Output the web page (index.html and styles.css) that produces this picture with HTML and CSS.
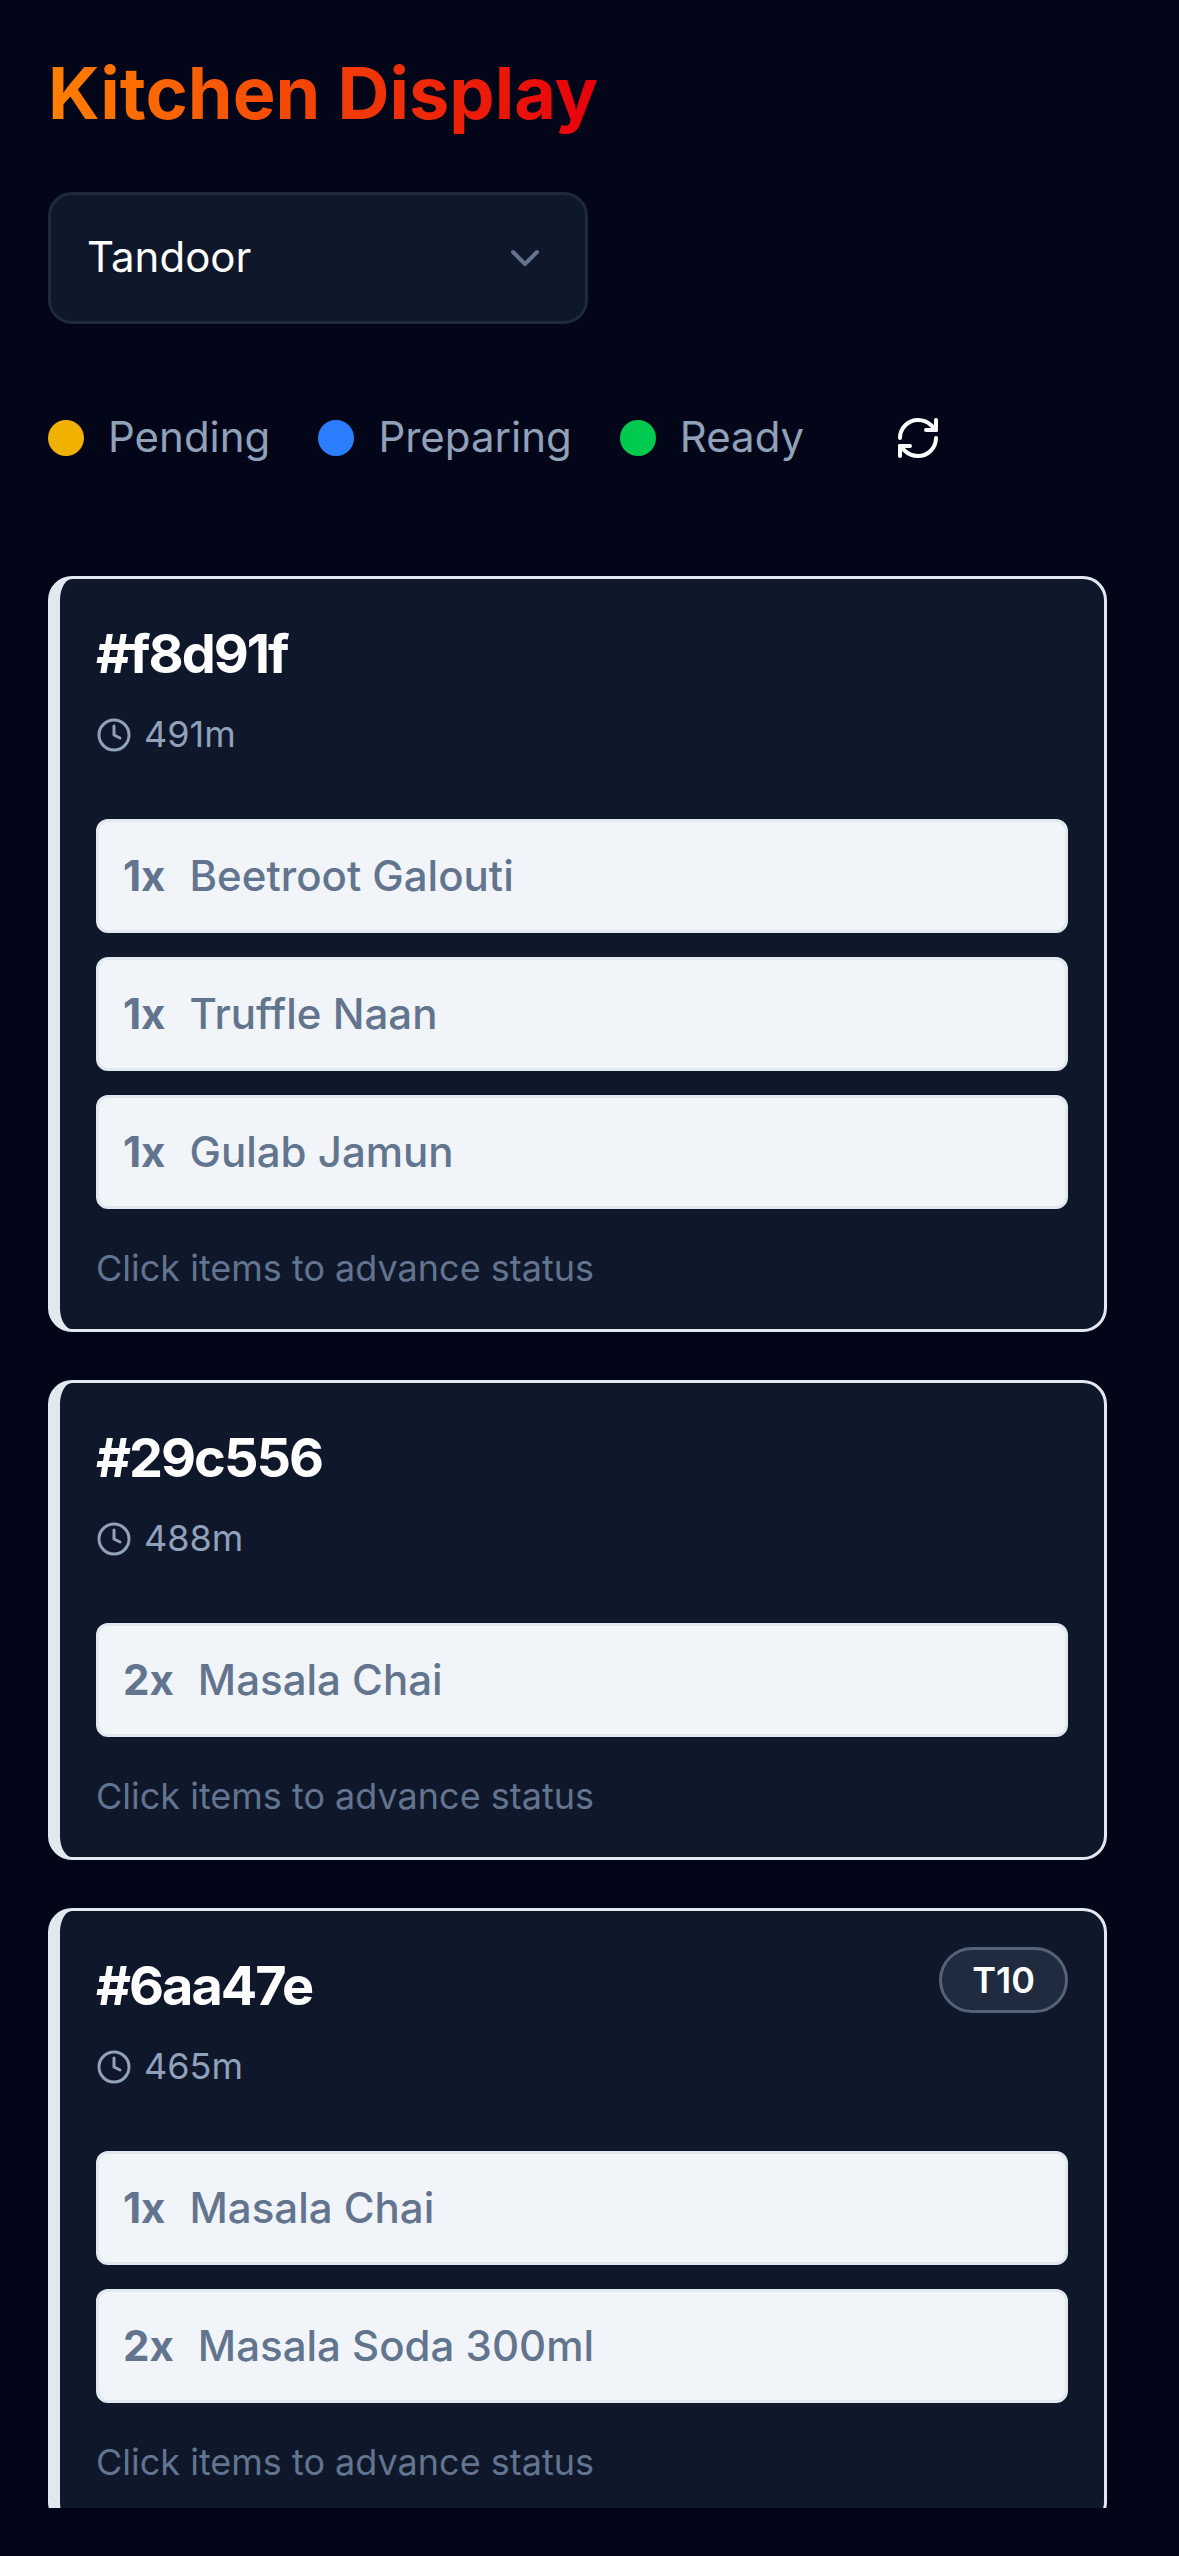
FILE: index.html
```html
<!DOCTYPE html>
<html lang="en">
<head>
    <meta charset="UTF-8">
    <meta name="viewport" content="width=device-width, initial-scale=1.0">
    <title>Kitchen Display</title>
    <link rel="stylesheet" href="styles.css">
</head>
<body>
    <div class="screen">
        <h1 class="title">Kitchen Display</h1>

        <div class="station-select">
            <span class="station-name">Tandoor</span>
            <svg class="chevron" viewBox="0 0 24 24"><path d="m6 9 6 6 6-6"/></svg>
        </div>

        <div class="legend">
            <div class="legend-item"><span class="dot dot-pending"></span><span class="legend-label">Pending</span></div>
            <div class="legend-item"><span class="dot dot-preparing"></span><span class="legend-label">Preparing</span></div>
            <div class="legend-item"><span class="dot dot-ready"></span><span class="legend-label">Ready</span></div>
            <button class="refresh">
                <svg viewBox="0 0 24 24">
                    <path d="M3 12a9 9 0 0 1 9-9 9.75 9.75 0 0 1 6.74 2.74L21 8"/>
                    <path d="M21 3v5h-5"/>
                    <path d="M21 12a9 9 0 0 1-9 9 9.75 9.75 0 0 1-6.74-2.74L3 16"/>
                    <path d="M8 16H3v5"/>
                </svg>
            </button>
        </div>

        <div class="orders">
            <div class="order">
                <div class="order-head">
                    <div>
                        <div class="order-id">#f8d91f</div>
                        <div class="order-time">
                            <svg viewBox="0 0 24 24"><circle cx="12" cy="12" r="10"/><path d="M12 6v6l4 2"/></svg>
                            <span class="time-label">491m</span>
                        </div>
                    </div>
                </div>
                <div class="items">
                    <div class="item"><span class="qty">1x</span><span>Beetroot Galouti</span></div>
                    <div class="item"><span class="qty">1x</span><span>Truffle Naan</span></div>
                    <div class="item"><span class="qty">1x</span><span>Gulab Jamun</span></div>
                </div>
                <p class="hint">Click items to advance status</p>
            </div>

            <div class="order">
                <div class="order-head">
                    <div>
                        <div class="order-id">#29c556</div>
                        <div class="order-time">
                            <svg viewBox="0 0 24 24"><circle cx="12" cy="12" r="10"/><path d="M12 6v6l4 2"/></svg>
                            <span class="time-label">488m</span>
                        </div>
                    </div>
                </div>
                <div class="items">
                    <div class="item"><span class="qty">2x</span><span>Masala Chai</span></div>
                </div>
                <p class="hint">Click items to advance status</p>
            </div>

            <div class="order">
                <div class="order-head">
                    <div>
                        <div class="order-id">#6aa47e</div>
                        <div class="order-time">
                            <svg viewBox="0 0 24 24"><circle cx="12" cy="12" r="10"/><path d="M12 6v6l4 2"/></svg>
                            <span class="time-label">465m</span>
                        </div>
                    </div>
                    <span class="table-badge">T10</span>
                </div>
                <div class="items">
                    <div class="item"><span class="qty">1x</span><span>Masala Chai</span></div>
                    <div class="item"><span class="qty">2x</span><span>Masala Soda 300ml</span></div>
                </div>
                <p class="hint">Click items to advance status</p>
            </div>
        </div>
    </div>
</body>
</html>
```

FILE: styles.css
```css
* {
    box-sizing: border-box;
}
body {
    font-family: "Inter", "Liberation Sans", sans-serif;
    background-color: #020618;
    color: #fff;
    margin: 0;
    padding: 0;
}
svg {
    fill: none;
    stroke: currentColor;
    stroke-width: 2;
    stroke-linecap: round;
    stroke-linejoin: round;
}
.screen {
    height: 2508px;
    overflow: hidden;
    padding: 48px 72px 0 48px;
}
.title {
    width: fit-content;
    margin: 0;
    padding-bottom: 6px;
    font-size: 72px;
    line-height: 90px;
    font-weight: 700;
    background: linear-gradient(to right, #ff8000, #e7000b);
    -webkit-background-clip: text;
    background-clip: text;
    color: transparent;
}
.station-select {
    display: flex;
    align-items: center;
    justify-content: space-between;
    width: 540px;
    height: 132px;
    margin-top: 48px;
    padding: 0 36px;
    background-color: #0f172a;
    border: 3px solid #1d293d;
    border-radius: 24px;
    font-size: 42px;
}
.station-name {
    padding-bottom: 3px;
}
.chevron {
    width: 48px;
    height: 48px;
    color: #62748e;
}
.legend {
    display: flex;
    align-items: center;
    gap: 48px;
    height: 96px;
    margin-top: 66px;
}
.legend-item {
    display: flex;
    align-items: center;
    gap: 24px;
    font-size: 42px;
    color: #90a1b9;
}
.legend-label {
    padding-bottom: 3px;
}
.dot {
    width: 36px;
    height: 36px;
    border-radius: 50%;
}
.dot-pending { background-color: #f0b100; }
.dot-preparing { background-color: #2b7fff; }
.dot-ready { background-color: #00c950; }
.refresh {
    margin-left: 18px;
    padding: 24px;
    border: none;
    background: none;
    color: #fff;
    display: flex;
}
.refresh svg {
    width: 48px;
    height: 48px;
}
.orders {
    display: flex;
    flex-direction: column;
    gap: 48px;
    margin-top: 90px;
}
.order {
    padding: 36px;
    background-color: #0f172a;
    border: 3px solid #e2e8f0;
    border-left-width: 12px;
    border-radius: 24px;
}
.order-head {
    display: flex;
    justify-content: space-between;
    align-items: flex-start;
    margin-bottom: 60px;
}
.order-id {
    padding-bottom: 6px;
    font-size: 54px;
    line-height: 78px;
    font-weight: 700;
    letter-spacing: -2px;
}
.order-time {
    display: flex;
    align-items: center;
    gap: 12px;
    height: 48px;
    margin-top: 12px;
    font-size: 36px;
    color: #90a1b9;
}
.order-time svg {
    width: 36px;
    height: 36px;
}
.time-label {
    padding-bottom: 2px;
}
.table-badge {
    padding: 6px 30px;
    background-color: #1f2b3f;
    border: 3px solid #556377;
    border-radius: 999px;
    font-size: 36px;
    line-height: 48px;
    font-weight: 600;
}
.items {
    display: flex;
    flex-direction: column;
    gap: 24px;
}
.item {
    display: flex;
    gap: 24px;
    padding: 24px;
    background-color: #f1f5f9;
    border: 3px solid #e2e8f0;
    border-radius: 12px;
    font-size: 42px;
    line-height: 60px;
    font-weight: 500;
    color: #62748e;
}
.qty {
    font-weight: 700;
}
.hint {
    margin: 36px 0 0;
    padding-bottom: 2px;
    font-size: 36px;
    line-height: 46px;
    color: #62748e;
}
```
